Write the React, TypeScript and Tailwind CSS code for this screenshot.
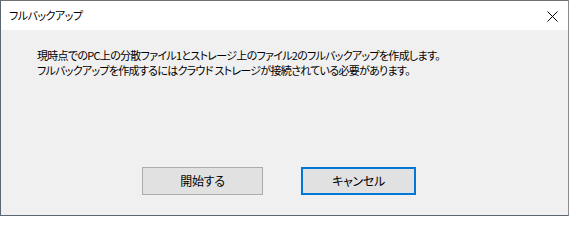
const jp = {
  fontFamily: '"Noto Sans CJK JP", "Noto Sans", sans-serif',
  fontFeatureSettings: '"palt"',
};

export default function App() {
  return (
    <div
      className="w-[569px] h-[216px] flex flex-col bg-[#f0f0f0] border-t border-l border-b border-r border-t-[#707070] border-l-[#5b6673] border-b-[#5b6673] border-r-[#8c8c8c] text-[11px] tracking-[-0.5px] text-black"
      style={jp}
    >
      {/* Title bar */}
      <div className="h-[29px] bg-white flex items-center justify-between pl-[8px] pr-[10px] shrink-0">
        <span className="leading-none">フルバックアップ</span>
        <svg width="11" height="11" viewBox="0 0 11 11" className="mt-[1px]">
          <path d="M0.5 0.5 L10.5 10.5 M10.5 0.5 L0.5 10.5" stroke="#000" strokeWidth="1" fill="none" />
        </svg>
      </div>

      {/* Message */}
      <div className="pl-[36px] pt-[18px] leading-[15px] tracking-[-0.7px]">
        <p>現時点でのPC上の分散ファイル1とストレージ上のファイル2のフルバックアップを作成します。</p>
        <p>フルバックアップを作成するにはクラウド ストレージが接続されている必要があります。</p>
      </div>

      {/* Buttons */}
      <div className="mt-auto mb-[20px] flex pl-[141px] gap-[38px]">
        <button className="w-[121px] h-[28px] bg-[#e1e1e1] border border-[#adadad] text-[12px] tracking-[-0.3px]">
          開始する
        </button>
        <button className="w-[115px] h-[28px] bg-[#e1e1e1] border-2 border-[#0078d7] text-[12px] tracking-[-0.3px]">
          キャンセル
        </button>
      </div>
    </div>
  );
}
